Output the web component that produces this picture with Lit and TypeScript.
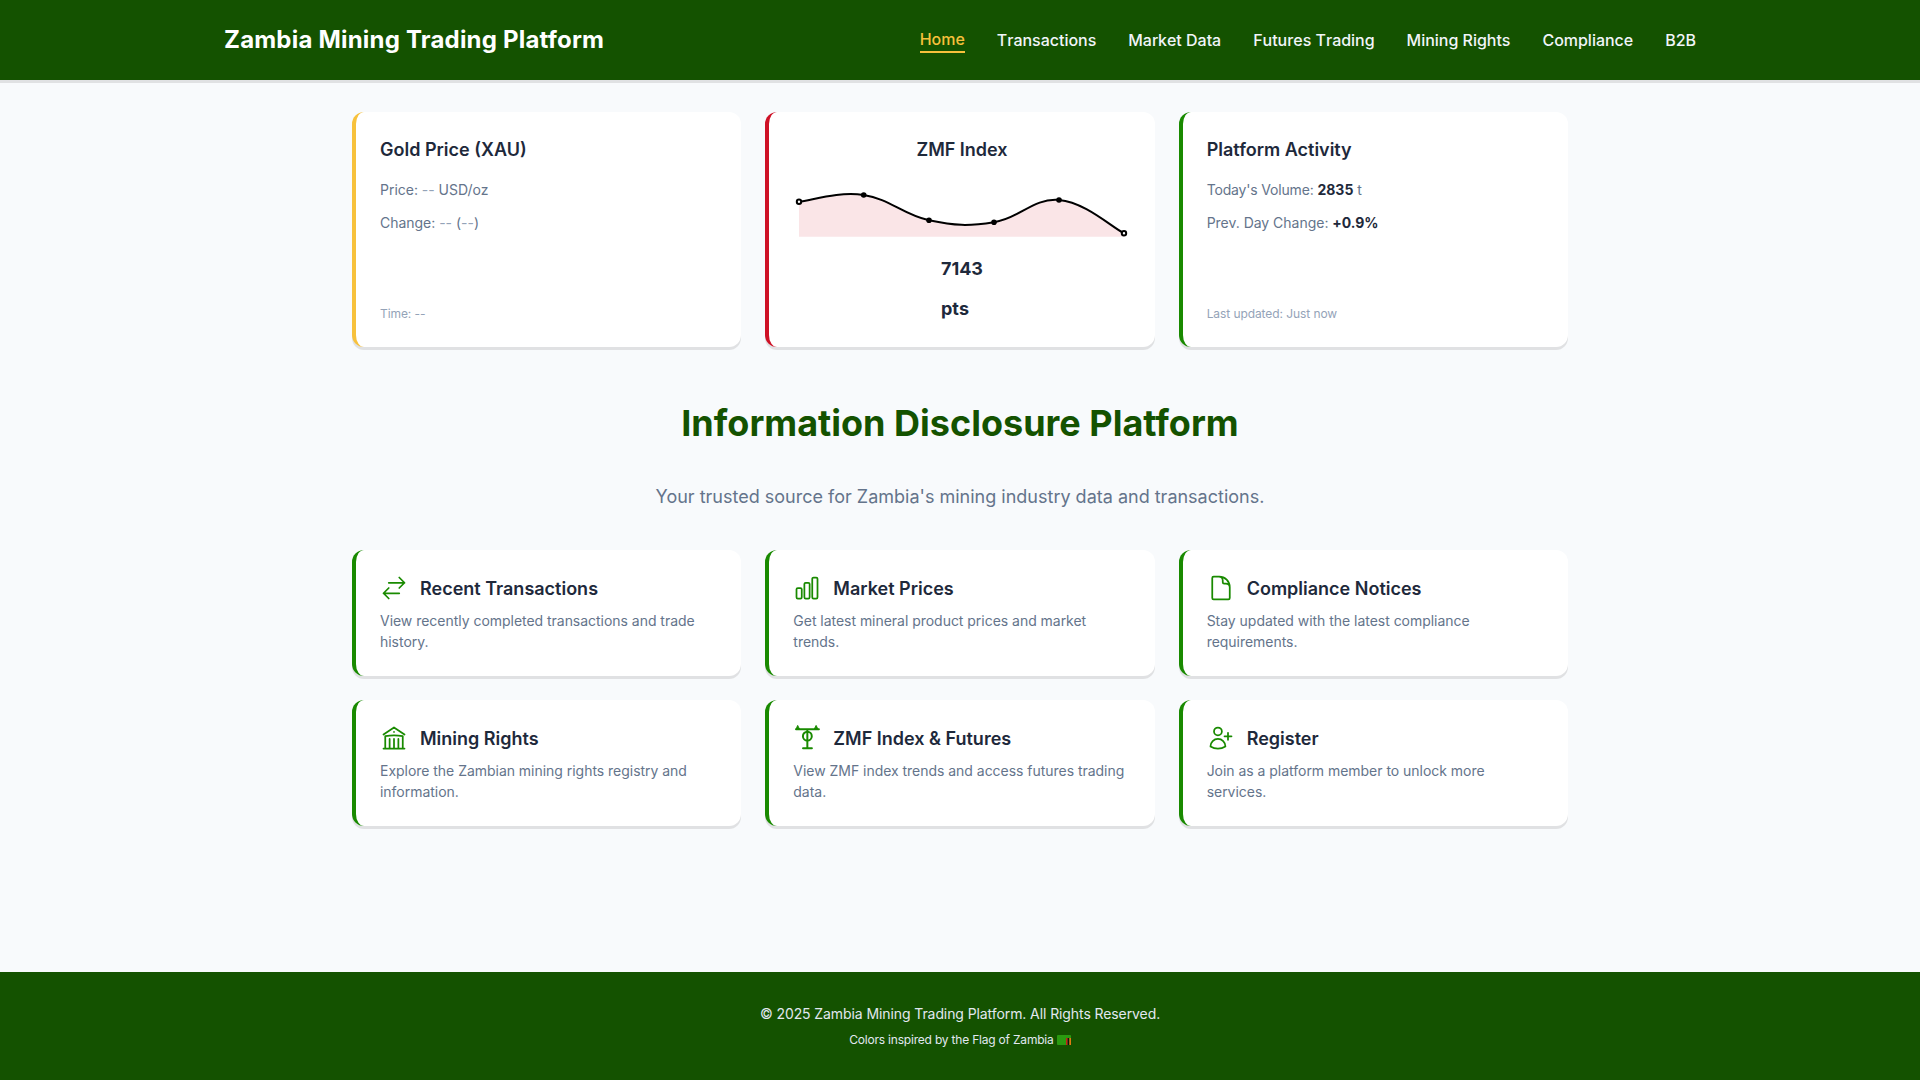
import { LitElement, html, css, svg } from "lit";
import { customElement } from "lit/decorators.js";

const nav = ["Home", "Transactions", "Market Data", "Futures Trading", "Mining Rights", "Compliance", "B2B"];

const stroke = (d: string) => svg`<path d=${d} fill="none" stroke="currentColor" stroke-width="1.5" stroke-linecap="round" stroke-linejoin="round"></path>`;

const crane = svg`
  <g fill="none" stroke="currentColor" stroke-width="1.7" stroke-linecap="round" stroke-linejoin="round">
    <path d="M2.6 4.4h19.6M12.3 4.4V20.8M8.6 20.8h7.6"></path>
    <circle cx="12.3" cy="10.4" r="3.8"></circle>
  </g>
  <path d="M2.6 4.4 4 1.2 5.6 4.4ZM18.2 4.4 19.8 1.2 21.4 4.4Z" fill="currentColor" stroke="currentColor" stroke-width=".8" stroke-linejoin="round"></path>`;

const features = [
  { t: "Recent Transactions", d: "View recently completed transactions and trade history.", i: stroke("M7.5 21 3 16.5m0 0L7.5 12M3 16.5h13.5m0-13.5L21 7.5m0 0L16.5 12M21 7.5H7.5") },
  { t: "Market Prices", d: "Get latest mineral product prices and market trends.", i: stroke("M3 13.125C3 12.504 3.504 12 4.125 12h2.25c.621 0 1.125.504 1.125 1.125v6.75C7.5 20.496 6.996 21 6.375 21h-2.25A1.125 1.125 0 0 1 3 19.875v-6.75ZM9.75 8.625c0-.621.504-1.125 1.125-1.125h2.25c.621 0 1.125.504 1.125 1.125v11.25c0 .621-.504 1.125-1.125 1.125h-2.25a1.125 1.125 0 0 1-1.125-1.125V8.625ZM16.5 4.125c0-.621.504-1.125 1.125-1.125h2.25C20.496 3 21 3.504 21 4.125v15.75c0 .621-.504 1.125-1.125 1.125h-2.25a1.125 1.125 0 0 1-1.125-1.125V4.125Z") },
  { t: "Compliance Notices", d: "Stay updated with the latest compliance requirements.", i: stroke("M19.5 14.25v-2.625a3.375 3.375 0 0 0-3.375-3.375h-1.5A1.125 1.125 0 0 1 13.5 7.125v-1.5a3.375 3.375 0 0 0-3.375-3.375H8.25m2.25 0H5.625c-.621 0-1.125.504-1.125 1.125v17.25c0 .621.504 1.125 1.125 1.125h12.75c.621 0 1.125-.504 1.125-1.125V11.25a9 9 0 0 0-9-9Z") },
  { t: "Mining Rights", d: "Explore the Zambian mining rights registry and information.", i: stroke("M12 21v-8.25M15.75 21v-8.25M8.25 21v-8.25M3 9l9-6 9 6m-1.5 12V10.332A48.36 48.36 0 0 0 12 9.75c-2.551 0-5.056.2-7.5.582V21M3 21h18M12 6.75h.008v.008H12V6.75Z") },
  { t: "ZMF Index & Futures", d: "View ZMF index trends and access futures trading data.", i: crane },
  { t: "Register", d: "Join as a platform member to unlock more services.", i: stroke("M18 7.5v3m0 0v3m0-3h3m-3 0h-3m-2.25-4.125a3.375 3.375 0 1 1-6.75 0 3.375 3.375 0 0 1 6.75 0ZM3 19.235v-.11a6.375 6.375 0 0 1 12.75 0v.109A12.318 12.318 0 0 1 9.374 21c-2.331 0-4.512-.645-6.374-1.766Z") },
];

// Chart points, relative to the svg's top-left corner.
const pts: [number, number][] = [[6, 21.7], [70.7, 15], [136, 40.3], [201, 42.3], [266, 20], [331, 53.3]];
const T = 0.2;
const line = pts.reduce((acc, p, i) => {
  if (i === 0) return `M${p[0]} ${p[1]}`;
  const p0 = pts[Math.max(i - 2, 0)];
  const p1 = pts[i - 1];
  const p3 = pts[Math.min(i + 1, pts.length - 1)];
  const c1 = [p1[0] + (p[0] - p0[0]) * T, p1[1] + (p[1] - p0[1]) * T];
  const c2 = [p[0] - (p3[0] - p1[0]) * T, p[1] - (p3[1] - p1[1]) * T];
  return `${acc}C${c1[0]} ${c1[1]} ${c2[0]} ${c2[1]} ${p[0]} ${p[1]}`;
}, "");
const area = `${line}V56.7H6Z`;

@customElement("app-root")
export class AppRoot extends LitElement {
  static styles = css`
    :host { display: flex; flex-direction: column; min-height: 100vh; background: #f8fafc; font-family: Inter, "Noto Sans", sans-serif; color: #1e293b; }
    * { box-sizing: border-box; }
    header { background: #145200; height: 80px; box-shadow: 0 3px 0 #e0e1e3; position: relative; }
    .bar { max-width: 1536px; height: 100%; margin: 0 auto; padding: 0 32px; display: flex; align-items: center; justify-content: space-between; }
    .logo { color: #fff; font-size: 24px; line-height: 32px; font-weight: 700; letter-spacing: .2px; }
    nav { display: flex; gap: 32px; align-items: center; font-kerning: none; letter-spacing: -.02px; }
    nav a { color: #f1f5f9; font-size: 16px; line-height: 24px; font-weight: 500; }
    nav a.on { color: #f7c13c; border-bottom: 2px solid #f7c13c; }
    main { flex: 1; width: 100%; max-width: 1280px; margin: 0 auto; padding: 32px 32px 0; }
    .grid { display: grid; grid-template-columns: repeat(3, minmax(0, 1fr)); gap: 24px; }
    .card { background: #fff; border-radius: 12px; border-left: 4px solid #198a00; padding: 24px; box-shadow: 0 3px 0 #e0e1e3; }
    .gold { border-left-color: #f7c13c; }
    .red { border-left-color: #ce1126; }
    .stat { display: flex; flex-direction: column; }
    .stat h3 { margin: 0 0 16px; font-size: 18px; line-height: 28px; font-weight: 600; }
    .stat p { margin: 0 0 13px; font-size: 14px; line-height: 20px; color: #64748b; letter-spacing: -.02px; }
    .stat p b { font-weight: 700; color: #1e293b; }
    .muted { color: #94a3b8; }
    .tight { letter-spacing: -.17px; }
    .stat .foot { margin: auto 0 0; font-size: 12px; line-height: 18px; color: #94a3b8; letter-spacing: -.08px; }
    .center { text-align: center; }
    .chart { display: block; width: 100%; height: 63px; margin-bottom: 12px; overflow: visible; }
    .vals { width: fit-content; margin: 0 auto; text-align: left; font-size: 18px; line-height: 28px; font-weight: 700; font-kerning: none; }
    .vals div + div { margin-top: 12px; }
    .hero { margin: 56px 0 39px; text-align: center; }
    .hero h1 { margin: 0 0 40px; font-size: 36px; line-height: 40px; font-weight: 700; color: #145200; }
    .hero p { margin: 0; font-size: 18px; line-height: 28px; color: #64748b; }
    .fhead { display: flex; align-items: center; gap: 12px; margin-bottom: 8px; }
    .fhead svg { width: 28px; height: 28px; color: #198a00; flex: none; display: block; }
    .fhead h3 { margin: 0; padding-top: 2px; font-size: 18px; line-height: 26px; font-weight: 600; }
    .card > .desc { margin: 0; font-size: 14px; line-height: 21px; color: #64748b; letter-spacing: -.03px; }
    footer { background: #145200; height: 108px; padding-top: 31px; text-align: center; color: #e2e8f0; }
    footer p { margin: 0; font-size: 14px; line-height: 21px; letter-spacing: -.09px; }
    footer p.small { margin-top: 7px; font-size: 12px; line-height: 18px; letter-spacing: -.2px; }
    .flag { display: inline-block; width: 14px; height: 10px; vertical-align: -1px; }
  `;

  render() {
    return html`
      <header><div class="bar">
        <div class="logo">Zambia Mining Trading Platform</div>
        <nav>${nav.map((n, i) => html`<a class=${i === 0 ? "on" : ""}>${n}</a>`)}</nav>
      </div></header>
      <main>
        <section class="grid">
          <div class="card gold stat">
            <h3>Gold Price (XAU)</h3>
            <p>Price: <span class="muted">--</span> USD/oz</p>
            <p>Change: <span class="muted">--</span> (<span class="muted">--</span>)</p>
            <p class="foot">Time: --</p>
          </div>
          <div class="card red stat">
            <h3 class="center">ZMF Index</h3>
            <svg class="chart">
              <path d=${area} fill="#ce1126" fill-opacity=".11"></path>
              <path d=${line} fill="none" stroke="#000" stroke-width="2"></path>
              ${pts.map(([x, y], i) => i === 0 || i === pts.length - 1
                ? svg`<circle cx=${x} cy=${y} r="2.2" fill="#fff" stroke="#000" stroke-width="2"></circle>`
                : svg`<circle cx=${x} cy=${y} r="2.8" fill="#000"></circle>`)}
            </svg>
            <div class="vals"><div>7143</div><div>pts</div></div>
          </div>
          <div class="card stat">
            <h3>Platform Activity</h3>
            <p><span class="tight">Today's Volume:</span> <b>2835</b> t</p>
            <p>Prev. Day Change: <b>+0.9%</b></p>
            <p class="foot">Last updated: Just now</p>
          </div>
        </section>
        <section class="hero">
          <h1>Information Disclosure Platform</h1>
          <p>Your trusted source for Zambia's mining industry data and transactions.</p>
        </section>
        <section class="grid">
          ${features.map((f) => html`
            <div class="card">
              <div class="fhead"><svg viewBox="0 0 24 24">${f.i}</svg><h3>${f.t}</h3></div>
              <p class="desc">${f.d}</p>
            </div>`)}
        </section>
      </main>
      <footer>
        <p>© 2025 Zambia Mining Trading Platform. All Rights Reserved.</p>
        <p class="small">Colors inspired by the Flag of Zambia <svg class="flag" viewBox="0 0 14 10"><rect width="14" height="10" rx="1" fill="#2a9a10"></rect><rect x="9" y="3" width="1.7" height="7" fill="#c8201a"></rect><rect x="10.7" y="3" width="1.7" height="7" fill="#111"></rect><rect x="12.4" y="3" width="1.6" height="7" fill="#e07a10"></rect></svg></p>
      </footer>
    `;
  }
}
